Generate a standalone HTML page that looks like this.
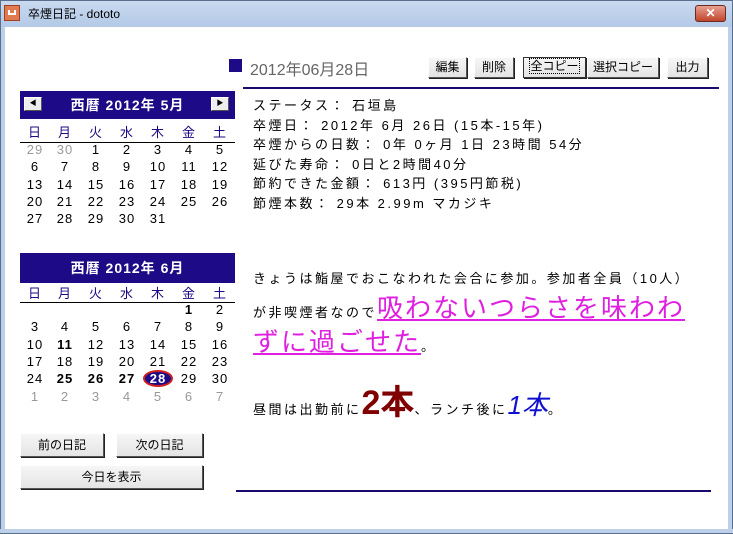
<!DOCTYPE html>
<html><head><meta charset="utf-8"><style>
*{margin:0;padding:0;box-sizing:border-box}
body{width:733px;height:534px;overflow:hidden;background:#fff;font-family:"Liberation Sans","Noto Sans CJK JP",sans-serif;font-size:13px;color:#000;position:relative}
.a{position:absolute;white-space:nowrap}
#tb{left:0;top:0;width:733px;height:27px;background:linear-gradient(#c9daf0,#b3c9e6);border:1px solid #5a6f8c;border-bottom:none}
#frameL{left:0;top:27px;width:5px;height:507px;background:#bcd0ea;border-left:1px solid #5a6f8c}
#frameR{left:728px;top:27px;width:5px;height:507px;background:#bcd0ea;border-right:1px solid #5a6f8c}
#frameB{left:0;top:529px;width:733px;height:5px;background:#bcd0ea;border-bottom:1px solid #5a6f8c}
.btn{position:absolute;background:linear-gradient(#f6f6f6,#e4e4e4);border:1px solid #fff;border-right-color:#555;border-bottom-color:#555;box-shadow:1px 1px 0 #222;text-align:center;font-size:12px}
.hd{position:absolute;left:20px;width:215px;background:#1c0a86;color:#fff;font-weight:bold;font-size:14px;text-align:center;letter-spacing:1px}
.arr{position:absolute;top:6px;width:18px;height:14px;background:#eee;border:1px solid #fff;border-right-color:#555;border-bottom-color:#555;font-size:7px;color:#000;line-height:12px;text-align:center;font-weight:normal;letter-spacing:0}
.wd{position:absolute;left:20px;width:215px;border-bottom:1px solid #000;color:#1c0a86;height:18px}
.g{color:#999}
.c{position:absolute;width:30px;text-align:center;font-size:13px;line-height:17px;letter-spacing:1px}
.b{font-weight:bold}
.sp{letter-spacing:2.5px}
</style></head><body>
<div class="a" id="tb"></div>
<div class="a" style="left:4px;top:5px;width:16px;height:16px;background:#e07a50;border:1px solid #a04020"><div style="position:absolute;left:3px;top:4px;width:8px;height:5px;border:2px solid #fff;border-top:none"></div></div>
<div class="a" style="left:28px;top:5px;font-size:12px">卒煙日記 - dototo</div>
<div class="a" style="left:695px;top:5px;width:31px;height:17px;background:linear-gradient(#e8a090,#c0442c);border:1px solid #6e2a20;border-radius:3px;color:#fff;text-align:center;font-weight:bold;font-size:12px;line-height:15px">✕</div>
<div class="a" id="frameL"></div><div class="a" id="frameR"></div><div class="a" id="frameB"></div>

<div class="a" style="left:229px;top:59px;width:13px;height:13px;background:#1c0a86"></div>
<div class="a" style="left:250px;top:56px;font-size:16px;color:#666">2012年06月28日</div>
<div class="btn" style="left:428px;top:57px;width:39px;height:21px;line-height:19px">編集</div>
<div class="btn" style="left:474px;top:57px;width:40px;height:21px;line-height:19px">削除</div>
<div class="btn" style="left:523px;top:57px;width:63px;height:21px;line-height:17px;border:1px solid #333"><span style="outline:1px dotted #000">全コピー</span></div>
<div class="btn" style="left:587px;top:57px;width:72px;height:21px;line-height:19px">選択コピー</div>
<div class="btn" style="left:667px;top:57px;width:41px;height:21px;line-height:19px">出力</div>
<div class="a" style="left:243px;top:87px;width:476px;height:2px;background:#1a0a6e"></div>

<div class="hd" style="top:91px;height:28px;line-height:28px">西暦 2012年 5月
<div class="arr" style="left:4px">◀</div><div class="arr" style="left:191px">▶</div></div>
<div class="wd" style="top:125px"></div>
<div class="hd" style="top:253px;height:30px;line-height:30px">西暦 2012年 6月</div>
<div class="wd" style="top:285px"></div>
<div id="cals"></div>

<div class="btn" style="left:20px;top:433px;width:84px;height:24px;line-height:22px">前の日記</div>
<div class="btn" style="left:116px;top:433px;width:87px;height:24px;line-height:22px">次の日記</div>
<div class="btn" style="left:20px;top:465px;width:183px;height:24px;line-height:22px">今日を表示</div>

<div class="a sp" style="left:253px;top:96px;line-height:19.6px">ステータス： 石垣島<br>卒煙日： 2012年 6月 26日 (15本-15年)<br>卒煙からの日数： 0年 0ヶ月 1日 23時間 54分<br>延びた寿命： 0日と2時間40分<br>節約できた金額： 613円 (395円節税)<br>節煙本数： 29本 2.99m マカジキ</div>

<div class="a sp" style="left:253px;top:268px">きょうは鮨屋でおこなわれた会合に参加。参加者全員（10人）</div>
<div class="a sp" style="left:253px;top:288px">が非喫煙者なので<span style="font-size:26px;color:#e020e0;text-decoration:underline;letter-spacing:2px">吸わないつらさを味わわ</span></div>
<div class="a sp" style="left:253px;top:322px"><span style="font-size:26px;color:#e020e0;text-decoration:underline;letter-spacing:2px">ずに過ごせた</span>。</div>
<div class="a sp" style="left:253px;top:375px">昼間は出勤前に<span style="font-size:34px;color:#800000;font-weight:bold;letter-spacing:0">2本</span>、ランチ後に<span style="font-size:26px;color:#1010d0;font-style:italic;letter-spacing:0">1本</span>。</div>
<div class="a" style="left:236px;top:490px;width:475px;height:2px;background:#1a0a6e"></div>

<script>
var cx=[20,50,81,112,143,174,205];
var h='';
var wk='日月火水木金土';
[[133],[294]].forEach(function(t){for(var i=0;i<7;i++)h+='<div class="c" style="left:'+cx[i]+'px;top:'+(t[0]-9)+'px;color:#1c0a86">'+wk[i]+'</div>';});
var may=[['g29','g30',1,2,3,4,5],[6,7,8,9,10,11,12],[13,14,15,16,17,18,19],[20,21,22,23,24,25,26],[27,28,29,30,31]];
var jun=[['','','','','','b1',2],[3,4,5,6,7,8,9],[10,'b11',12,13,14,15,16],[17,18,19,20,21,22,23],[24,'b25','b26','b27','t28',29,30],['g1','g2','g3','g4','g5','g6','g7']];
function draw(rows,y0,dy){rows.forEach(function(r,ri){r.forEach(function(v,i){v=String(v);var cls='c',s=v;if(v[0]=='g'){cls+=' g';s=v.slice(1)}else if(v[0]=='b'){cls+=' b';s=v.slice(1)}else if(v[0]=='t'){s='<span style="display:inline-block;background:#1c0a86;color:#fff;border:2px solid #d02020;border-radius:50%;width:30px;line-height:13px;font-weight:bold">'+v.slice(1)+'</span>'}
h+='<div class="'+cls+'" style="left:'+cx[i]+'px;top:'+(y0+ri*dy-9)+'px">'+s+'</div>';});});}
draw(may,150,17.3);draw(jun,310,17.3);
document.getElementById('cals').innerHTML=h;
</script>
</body></html>
